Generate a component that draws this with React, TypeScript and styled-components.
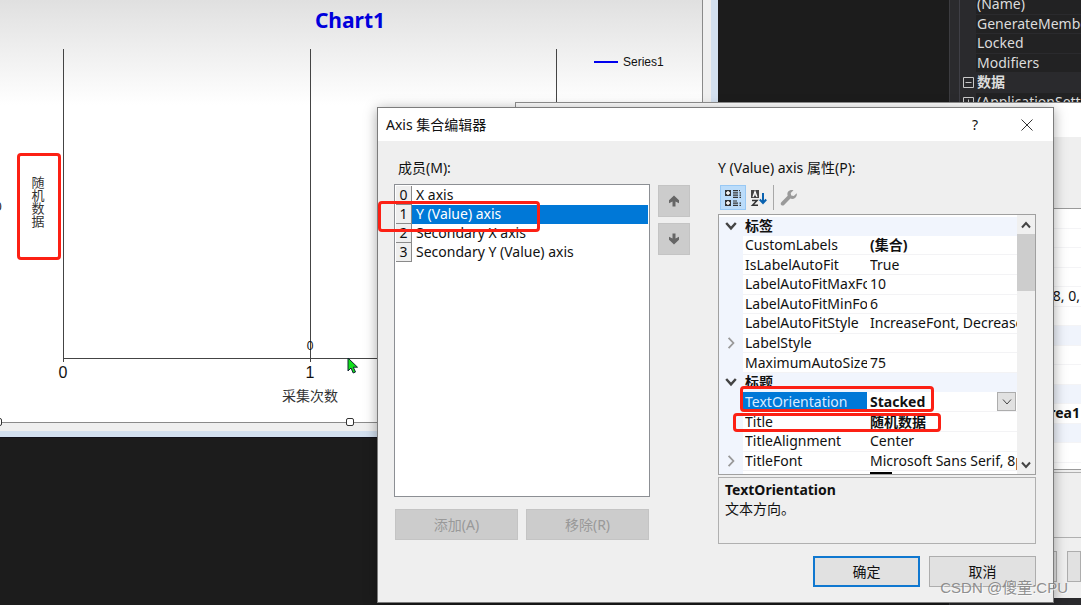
import React, { useState } from 'react';
import styled, { createGlobalStyle, css } from 'styled-components';

const sans = `"Noto Sans", "Noto Sans CJK SC", sans-serif`;

const GlobalStyle = createGlobalStyle`
  *, *::before, *::after { box-sizing: border-box; }
  body { margin: 0; background: #1c1c1c; font: 14px/19px ${sans}; color: #111; }
  button, select { font: inherit; color: inherit; margin: 0; padding: 0; border: 0; }
`;

const Desktop = styled.main`
  position: relative;
  min-height: 100vh;
  overflow: hidden;
  background: #1c1c1c;
`;

/* ---------- form designer ---------- */

const FormWindow = styled.section`
  position: absolute;
  left: 0;
  top: 0;
  width: 718px;
  padding: 0 7px 6px 0;
  background: #d3e0ef;
  border-bottom: 1px solid #12121c;
`;

const FormSurface = styled.div`
  padding: 0 8px 8px 0;
  background: #efefef;
`;

const ChartSurface = styled.div`
  height: 423px;
  border: solid #8a8a8a;
  border-width: 0 1px 1px 0;
  background: linear-gradient(#e0e0e0, #ffffff 105px);
`;

const ChartDrawing = styled.svg`
  display: block;
  overflow: visible;
`;

const Handle = styled.span<{ $x: number; $y: number }>`
  position: absolute;
  left: ${p => p.$x}px;
  top: ${p => p.$y}px;
  width: 8px;
  height: 8px;
  border: 1px solid #333;
  border-radius: 2px;
  background: #fff;
`;

/* ---------- IDE property panel ---------- */

const IdePanel = styled.aside`
  position: absolute;
  left: 949px;
  right: 0;
  top: 0;
  bottom: 0;
  padding-left: 9px;
  background: #2a2a2d;
  border-left: 1px solid #3c3c40;
  color: #dcdcdc;
  overflow: hidden;
`;

const IdeRows = styled.div`
  display: grid;
  grid-auto-rows: 1fr;
  height: 117px;
  margin-top: -5px;
  border-left: 1px solid #3f3f46;
`;

const IdeRow = styled.div<{ $group?: boolean }>`
  display: grid;
  grid-template-columns: 16px 1fr;
  white-space: nowrap;
  font-weight: ${p => (p.$group ? 700 : 400)};
  line-height: 18px;
  svg { align-self: center; justify-self: center; }
  span {
    padding-left: 1px;
    background: ${p => (p.$group ? '#2a2a2d' : '#222223')};
    border-bottom: 1px solid #2a2a2d;
  }
`;

/* ---------- windows ---------- */

const BackWindow = styled.section`
  position: absolute;
  left: 515px;
  right: 0;
  top: 102px;
  height: 496px;
  display: flex;
  flex-direction: column;
  background: #efefef;
  border: solid #909090;
  border-width: 1px 0 0 1px;
`;

const BackTitle = styled.div`
  height: 34px;
  background: #fff;
`;

const BackGrid = styled.div`
  margin-top: 71px;
  height: 262px;
  overflow: hidden;
  background: #fff;
  border: solid #9a9a9a;
  border-width: 1px 0;
`;

const BackRows = styled.div`
  display: grid;
  grid-auto-rows: 1fr;
  height: 254px;
`;

const BackRow = styled.div<{ $tint?: boolean }>`
  padding: 0 1px;
  text-align: right;
  line-height: 18px;
  background: ${p => (p.$tint ? '#f0f4fc' : '#fff')};
  border-bottom: 1px solid #f4f4f6;
`;

const BackDescription = styled.div`
  height: 66px;
  margin-top: 2px;
  border: solid #b0b0b0;
  border-width: 1px 0;
`;

const BackActions = styled.div`
  display: grid;
  grid-template-columns: 100px 14px;
  gap: 10px;
  justify-content: end;
  margin-top: 13px;
`;

const BackButton = styled.button`
  height: 31px;
  background: #e1e1e1;
  border: 1px solid #adadad;
`;

const Dialog = styled.section`
  position: absolute;
  left: 377px;
  top: 107px;
  width: 677px;
  background: #efefef;
  border: 1px solid #7c7c7c;
  box-shadow: 0 2px 12px rgba(0, 0, 0, 0.35);
`;

const TitleBar = styled.header`
  display: flex;
  align-items: center;
  height: 33px;
  padding: 0 11px 0 8px;
  background: #fff;
`;

const DialogTitle = styled.h1`
  flex: 1;
  margin: 0;
  font-size: 14px;
  font-weight: 400;
`;

const TitleButton = styled.button`
  display: grid;
  place-items: center;
  width: 30px;
  height: 30px;
  margin-left: 22px;
  background: transparent;
`;

const DialogBody = styled.div`
  display: grid;
  grid-template-columns: 256px 32px 1fr;
  padding: 17px 17px 0 16px;
`;

const Column = styled.div`
  display: flex;
  flex-direction: column;
`;

const FieldLabel = styled.h2<{ $inset?: boolean }>`
  margin: 0 0 7px;
  padding-left: ${p => (p.$inset ? 4 : 0)}px;
  font-size: 14px;
  font-weight: 400;
`;

const MemberList = styled.div`
  height: 313px;
  padding: 1px;
  background: #fff;
  border: 1px solid #8c8f94;
`;

const Member = styled.button`
  display: grid;
  grid-template-columns: 16px 1fr;
  width: 100%;
  height: 19px;
  text-align: left;
  background: #fff;
`;

const MemberIndex = styled.span`
  background: #efefef;
  border: solid #8a8a8a;
  border-width: 0 1px 1px 0;
  text-align: center;
  line-height: 18px;
`;

const MemberName = styled.span<{ $selected: boolean }>`
  padding-left: 4px;
  line-height: 18px;
  background: ${p => (p.$selected ? '#0078d7' : '#fff')};
  color: ${p => (p.$selected ? '#fff' : '#111')};
`;

const ListActions = styled.div`
  display: grid;
  grid-template-columns: 1fr 1fr;
  gap: 8px;
  padding: 12px 1px 0;
`;

const disabledLook = css`
  background: #cccccc;
  border: 1px solid #c4c4c4;
  color: #999;
`;

const ActionButton = styled.button<{ $primary?: boolean }>`
  height: 31px;
  background: #e1e1e1;
  border: ${p => (p.$primary ? '2px solid #1078d0' : '1px solid #adadad')};
  &:disabled { ${disabledLook} }
`;

const OrderButtons = styled.div`
  display: flex;
  flex-direction: column;
  gap: 6px;
  padding: 27px 0 0 0;
  margin-left: 8px;
`;

const OrderButton = styled.button`
  display: grid;
  place-items: center;
  width: 32px;
  height: 32px;
  ${disabledLook}
`;

const PropertyColumn = styled(Column)`
  margin-left: 36px;
`;

const Toolbar = styled.div`
  display: flex;
  align-items: center;
  height: 27px;
  margin-bottom: 3px;
  padding: 0 2px;
`;

const ToolButton = styled.button<{ $active?: boolean }>`
  display: grid;
  place-items: center;
  width: 26px;
  height: 25px;
  background: ${p => (p.$active ? '#bbdcfa' : 'transparent')};
  border: 1px solid ${p => (p.$active ? '#98c8f4' : 'transparent')};
`;

const Separator = styled.span`
  width: 1px;
  height: 25px;
  margin: 0 2px 0 1px;
  background: #a8a8a8;
`;

const GridFrame = styled.div`
  display: grid;
  grid-template-columns: 1fr 18px;
  height: 261px;
  overflow: hidden;
  border: 1px solid #a0a0a0;
  background: #fff;
`;

const GridView = styled.div`
  overflow: hidden;
`;

const PropertyTable = styled.table`
  width: 100%;
  height: 274px;
  margin-top: 2px;
  table-layout: fixed;
  border-collapse: collapse;
  th, td { padding: 0; text-align: left; white-space: nowrap; overflow: hidden; line-height: 18px; }
`;

const GutterCol = styled.col`width: 24px;`;
const NameCol = styled.col`width: 124px;`;

const GutterCell = styled.td`
  background: #f1f5fd;
  svg { display: block; margin-left: 6px; }
`;

const NameCell = styled.th<{ $selected?: boolean }>`
  font-weight: 400;
  border-bottom: 1px solid #f3f3f5;
  color: ${p => (p.$selected ? '#d8ecff' : '#111')};
  background: ${p => (p.$selected ? '#0078d7' : '#fff')};
  span { display: block; margin-left: 2px; overflow: hidden; }
`;

const ValueCell = styled.td<{ $bold?: boolean }>`
  border-bottom: 1px solid #f3f3f5;
  font-weight: ${p => (p.$bold ? 700 : 400)};
  > span { display: block; margin-left: 3px; overflow: hidden; }
`;

const GroupCell = styled.th`
  font-weight: 700;
  background: #f1f5fd;
  span { margin-left: 2px; }
`;

const Combo = styled.div`
  display: grid;
  grid-template-columns: 1fr 19px;
  height: 19px;
  margin-right: 1px;
  select {
    grid-area: 1 / 1 / 2 / 3;
    appearance: none;
    padding-left: 3px;
    background: transparent;
    outline: none;
    line-height: 18px;
  }
`;

const ComboArrow = styled.span`
  grid-area: 1 / 2;
  display: grid;
  place-items: center;
  background: #e1e1e1;
  border: 1px solid #adadad;
  pointer-events: none;
`;

const Swatch = styled.i`
  display: inline-block;
  width: 22px;
  height: 14px;
  margin-right: 8px;
  background: #000;
  vertical-align: top;
`;

const ScrollBar = styled.div`
  display: grid;
  grid-template-rows: 19px 57px 1fr 19px;
  background: #f0f0f0;
`;

const ScrollArrow = styled.button`
  display: grid;
  place-items: center;
  background: #f0f0f0;
`;

const Thumb = styled.div`
  background: #cdcdcd;
`;

const Track = styled.div``;

const Description = styled.div`
  height: 67px;
  margin-top: 2px;
  padding: 2px 6px;
  border: 1px solid #b0b0b0;
  p, h3 { margin: 0; font-size: 14px; }
`;

const DialogActions = styled.footer`
  display: grid;
  grid-template-columns: 107px 107px;
  gap: 9px;
  justify-content: end;
  padding: 12px 17px 15px;
`;

/* ---------- overlays ---------- */

const Mark = styled.span<{ $x: number; $y: number; $w: number; $h: number }>`
  position: absolute;
  left: ${p => p.$x}px;
  top: ${p => p.$y}px;
  width: ${p => p.$w}px;
  height: ${p => p.$h}px;
  border: 3px solid #fc2014;
  border-radius: 4px;
  pointer-events: none;
`;

const Pointer = styled.svg`
  position: absolute;
  left: 347px;
  top: 357px;
`;

const Watermark = styled.span`
  position: absolute;
  right: 13px;
  top: 578px;
  color: rgba(130, 130, 130, 0.9);
  font-family: "Liberation Sans", "Noto Sans CJK SC", sans-serif;
  font-size: 15px;
  text-shadow: 1px 1px 0 rgba(255, 255, 255, 0.6);
  white-space: nowrap;
`;

/* ---------- icons ---------- */

const Chevron = ({ dir, size = 10, color = '#444', weight = 2 }: { dir: 'up' | 'down' | 'right'; size?: number; color?: string; weight?: number }) => {
  const d = { up: 'M1 7.5 5 3l4 4.5', down: 'M1 2.5 5 7l4-4.5', right: 'M3 .8 7 5 3 9.2' }[dir];
  return (
    <svg width={size} height={size} viewBox="0 0 10 10" fill="none" stroke={color} strokeWidth={weight}>
      <path d={d} />
    </svg>
  );
};

const BlockArrow = ({ down }: { down?: boolean }) => (
  <svg width="12" height="12" viewBox="0 0 12 12" fill="#666">
    <path d={down ? 'M4.5 .5h3v5L11 3.800v2.900L6 11.500 1 6.700V3.800l3.500 1.700z' : 'M4.500 11.500h3v-5L11 8.200V5.300L6 .5 1 5.300v2.900l3.500-1.700z'} />
  </svg>
);

const CategorizedIcon = () => (
  <svg width="18" height="18" viewBox="0 0 18 18">
    <path fill="#333" d="M1 1h6v6H1zM1 11h6v6H1z" />
    <path stroke="#fff" strokeWidth="1.500" d="M2 4h4M4 2v4M2 14h4M4 12v4" />
    <path stroke="#333" strokeWidth="1.200" d="M9 1.700h5M9 3.900h5M9 6.100h5M9 8.300h5M9 12h4M9 14.200h5M9 16.400h5M15 1.700h1M15.500 3.900h1.500M15.500 6.100h1.500M15.500 8.300h1.500M15.500 14.200h1.500M15.500 16.400h1.500" />
  </svg>
);

const SortIcon = () => (
  <svg width="18" height="18" viewBox="0 0 18 18" fill="none">
    <path fill="#444" d="M1 1h8v8H1z" />
    <path stroke="#fff" strokeWidth="1.200" d="M3 8 5 2.500 7 8M3.700 6h2.700" />
    <path stroke="#333" strokeWidth="1.500" d="M2 11.500h5L2.500 16.200H8" />
    <path stroke="#0a62b0" strokeWidth="2" d="M13 4v10M9.800 10.500 13 14l3.200-3.500" />
  </svg>
);

const WrenchIcon = () => (
  <svg width="18" height="18" viewBox="0 0 18 18" fill="#9a9a9a">
    <path d="M16.700 4.300 13.800 7l-2.600-.5-.5-2.500L13.500 1.200C11.500.5 9.300 1 8.200 2.600c-1 1.300-1 2.800-.5 4.200L1.300 13.200c-.8.8-.8 2 0 2.800s2 .8 2.800 0l6.300-6.400c1.600.6 3.200.4 4.600-.7 1.500-1.100 2.200-2.900 1.700-4.600z" />
  </svg>
);

const TreeBox = ({ plus }: { plus?: boolean }) => (
  <svg width="11" height="11" viewBox="0 0 11 11" fill="none" stroke="#c8c8c8">
    <path d={`M.5.5h10v10H.5zM2.500 5.500h6${plus ? 'M5.500 2.500v6' : ''}`} />
  </svg>
);

/* ---------- data ---------- */

const members = ['X axis', 'Y (Value) axis', 'Secondary X axis', 'Secondary Y (Value) axis'];

type Property = { name: string; value?: string; bold?: boolean; group?: boolean; expandable?: boolean; combo?: boolean; swatch?: boolean };

const properties: Property[] = [
  { name: '标签', group: true },
  { name: 'CustomLabels', value: '(集合)', bold: true },
  { name: 'IsLabelAutoFit', value: 'True' },
  { name: 'LabelAutoFitMaxFontSize', value: '10' },
  { name: 'LabelAutoFitMinFontSize', value: '6' },
  { name: 'LabelAutoFitStyle', value: 'IncreaseFont, DecreaseFont' },
  { name: 'LabelStyle', expandable: true },
  { name: 'MaximumAutoSize', value: '75' },
  { name: '标题', group: true },
  { name: 'TextOrientation', value: 'Stacked', bold: true, combo: true },
  { name: 'Title', value: '随机数据', bold: true },
  { name: 'TitleAlignment', value: 'Center' },
  { name: 'TitleFont', value: 'Microsoft Sans Serif, 8pt', expandable: true },
  { name: 'TitleForeColor', value: 'Black', swatch: true },
];

const backRows: { text?: string; bold?: boolean; tint?: boolean }[] = [
  {}, {}, {}, {}, { text: '8, 0,' }, {}, { tint: true }, {}, {}, { tint: true }, { text: 'Area1', bold: true }, { tint: true }, {},
];

const Chart = () => (
  <ChartDrawing width="700" height="422" role="img" aria-label="Chart1">
    <text x="350" y="28" textAnchor="middle" fontSize="21" fontWeight="700" fill="#0000dc">Chart1</text>
    <g stroke="#444" fill="none">
      <path d="M63.500 49v313M310.500 49v313M556.500 49v313" />
      <path d="M63 358.500h494" />
    </g>
    <path d="M594 62h24" stroke="#0000ee" strokeWidth="2" />
    <g fontFamily="Liberation Sans, sans-serif" fill="#111">
      <text x="623" y="66" fontSize="12">Series1</text>
      <text x="310" y="350" fontSize="12" textAnchor="middle">0</text>
      <text x="63" y="378" fontSize="16" textAnchor="middle">0</text>
      <text x="310" y="378" fontSize="16" textAnchor="middle">1</text>
      <text x="-5" y="211" fontSize="12">0</text>
    </g>
    <g fontFamily="Noto Sans CJK SC, sans-serif" fill="#333" textAnchor="middle">
      <text x="310" y="401" fontSize="14">采集次数</text>
      {[...'随机数据'].map((c, i) => (
        <text key={c} x="38" y={187 + i * 13} fontSize="13">{c}</text>
      ))}
    </g>
  </ChartDrawing>
);

const PropertyRow = ({ p }: { p: Property }) => {
  if (p.group) {
    return (
      <tr>
        <GutterCell><Chevron dir="down" size={12} /></GutterCell>
        <GroupCell colSpan={2}><span>{p.name}</span></GroupCell>
      </tr>
    );
  }
  return (
    <tr>
      <GutterCell>{p.expandable && <Chevron dir="right" size={12} color="#999" weight={1.5} />}</GutterCell>
      <NameCell scope="row" $selected={p.combo}><span>{p.name}</span></NameCell>
      <ValueCell $bold={p.bold}>
        {p.combo ? (
          <Combo>
            <select aria-label={p.name} defaultValue={p.value}>
              <option>Auto</option>
              <option>Horizontal</option>
              <option>Stacked</option>
            </select>
            <ComboArrow><Chevron dir="down" weight={1} /></ComboArrow>
          </Combo>
        ) : (
          <span>{p.swatch && <Swatch />}{p.value}</span>
        )}
      </ValueCell>
    </tr>
  );
};

export default function App() {
  const [selected, setSelected] = useState(1);
  return (
    <Desktop>
      <GlobalStyle />

      <FormWindow>
        <FormSurface>
          <ChartSurface><Chart /></ChartSurface>
        </FormSurface>
        <Handle $x={-6} $y={418} />
        <Handle $x={346} $y={418} />
      </FormWindow>

      <IdePanel>
        <IdeRows>
          <IdeRow><i /><span>(Name)</span></IdeRow>
          <IdeRow><i /><span>GenerateMember</span></IdeRow>
          <IdeRow><i /><span>Locked</span></IdeRow>
          <IdeRow><i /><span>Modifiers</span></IdeRow>
          <IdeRow $group><TreeBox /><span>数据</span></IdeRow>
          <IdeRow><TreeBox plus /><span>(ApplicationSettings)</span></IdeRow>
        </IdeRows>
      </IdePanel>

      <BackWindow>
        <BackTitle />
        <BackGrid>
          <BackRows>
            {backRows.map((r, i) => (
              <BackRow key={i} $tint={r.tint}>{r.bold ? <b>{r.text}</b> : r.text}</BackRow>
            ))}
          </BackRows>
        </BackGrid>
        <BackDescription />
        <BackActions>
          <BackButton aria-label="确定" />
          <BackButton aria-label="取消" />
        </BackActions>
      </BackWindow>

      <Dialog role="dialog" aria-labelledby="editor-title">
        <TitleBar>
          <DialogTitle id="editor-title">Axis 集合编辑器</DialogTitle>
          <TitleButton>?</TitleButton>
          <TitleButton aria-label="关闭">
            <svg width="12" height="12" viewBox="0 0 12 12" stroke="#333"><path d="m.5.5 11 11M11.500.5l-11 11" /></svg>
          </TitleButton>
        </TitleBar>
        <DialogBody>
          <Column>
            <FieldLabel $inset id="members-label">成员(M):</FieldLabel>
            <MemberList role="listbox" aria-labelledby="members-label">
              {members.map((m, i) => (
                <Member key={m} role="option" aria-selected={i === selected} onClick={() => setSelected(i)}>
                  <MemberIndex>{i}</MemberIndex>
                  <MemberName $selected={i === selected}>{m}</MemberName>
                </Member>
              ))}
            </MemberList>
            <ListActions>
              <ActionButton disabled>添加(A)</ActionButton>
              <ActionButton disabled>移除(R)</ActionButton>
            </ListActions>
          </Column>
          <OrderButtons>
            <OrderButton disabled aria-label="上移"><BlockArrow /></OrderButton>
            <OrderButton disabled aria-label="下移"><BlockArrow down /></OrderButton>
          </OrderButtons>
          <PropertyColumn>
            <FieldLabel>Y (Value) axis 属性(P):</FieldLabel>
            <Toolbar>
              <ToolButton $active aria-label="按分类顺序"><CategorizedIcon /></ToolButton>
              <ToolButton aria-label="字母顺序"><SortIcon /></ToolButton>
              <Separator />
              <ToolButton disabled aria-label="属性页"><WrenchIcon /></ToolButton>
            </Toolbar>
            <GridFrame>
              <GridView>
                <PropertyTable>
                  <colgroup><GutterCol /><NameCol /><col /></colgroup>
                  <tbody>{properties.map(p => <PropertyRow key={p.name} p={p} />)}</tbody>
                </PropertyTable>
              </GridView>
              <ScrollBar>
                <ScrollArrow aria-label="向上滚动"><Chevron dir="up" /></ScrollArrow>
                <Thumb />
                <Track />
                <ScrollArrow aria-label="向下滚动"><Chevron dir="down" /></ScrollArrow>
              </ScrollBar>
            </GridFrame>
            <Description>
              <h3>TextOrientation</h3>
              <p>文本方向。</p>
            </Description>
          </PropertyColumn>
        </DialogBody>
        <DialogActions>
          <ActionButton $primary>确定</ActionButton>
          <ActionButton>取消</ActionButton>
        </DialogActions>
      </Dialog>

      <Mark $x={17} $y={153} $w={44} $h={107} />
      <Mark $x={378} $y={201} $w={162} $h={31} />
      <Mark $x={740} $y={386} $w={194} $h={26} />
      <Mark $x={733} $y={413} $w={208} $h={19} />

      <Pointer width="12" height="18" viewBox="0 0 12 18">
        <path d="M1 1v13l3-3 2.200 5 2.300-1-2.200-4.800H10.500z" fill="#12e01c" stroke="#123" />
      </Pointer>
      <Watermark>CSDN @傻童:CPU</Watermark>
    </Desktop>
  );
}
